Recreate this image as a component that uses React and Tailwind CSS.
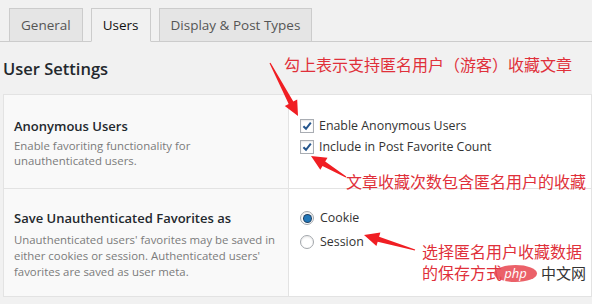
import React from "react"

const font = { fontFamily: '"Open Sans", "Noto Sans", sans-serif' }
const cjk = { fontFamily: '"Noto Sans CJK SC", "Noto Sans", sans-serif' }

// tapered annotation arrow from tail to tip
function arrowPoints(x1, y1, x2, y2) {
  const dx = x2 - x1
  const dy = y2 - y1
  const len = Math.hypot(dx, dy)
  const ux = dx / len
  const uy = dy / len
  const nx = -uy
  const ny = ux
  const head = 15
  const bx = x2 - ux * head
  const by = y2 - uy * head
  const pts = [
    [x1 + nx * 0.6, y1 + ny * 0.6],
    [bx + nx * 2.6, by + ny * 2.6],
    [bx + nx * 7, by + ny * 7],
    [x2, y2],
    [bx - nx * 7, by - ny * 7],
    [bx - nx * 2.6, by - ny * 2.6],
    [x1 - nx * 0.6, y1 - ny * 0.6],
  ]
  return pts.map((p) => p.map((v) => v.toFixed(1)).join(",")).join(" ")
}

function Checkbox() {
  return (
    <span className="flex h-[14px] w-[14px] shrink-0 items-center justify-center border border-[#a9adb3] bg-white shadow-[inset_0_1px_2px_rgba(0,0,0,0.1)]">
      <svg viewBox="0 0 12 12" className="h-[12px] w-[12px]">
        <path d="M2.4 6.2 L5 8.8 L9.8 2.6" fill="none" stroke="#24558c" strokeWidth="2" />
      </svg>
    </span>
  )
}

function Radio({ checked }) {
  return (
    <span className="flex h-[14px] w-[14px] shrink-0 items-center justify-center rounded-full border border-[#a3a7ac] bg-white shadow-[inset_0_1px_2px_rgba(0,0,0,0.1)]">
      {checked && <span className="h-[7px] w-[7px] rounded-full bg-[#2177b8] ring-1 ring-[#1c3f63]" />}
    </span>
  )
}

function Tab({ label, active }) {
  return (
    <div
      className={
        "-mb-px flex h-[34px] items-center border border-[#cccccc] px-[11px] text-[13.5px] " +
        (active ? "border-b-[#f1f1f1] bg-[#f1f1f1] text-[#111]" : "bg-[#e5e5e5] text-[#555]")
      }
    >
      {label}
    </div>
  )
}

export default function App() {
  return (
    <div className="relative h-[304px] w-[592px] overflow-hidden bg-[#f1f1f1]" style={font}>
      <div className="flex items-end gap-[8px] border-b border-[#cccccc] pl-[9px] pt-[8px]">
        <Tab label="General" />
        <Tab label="Users" active />
        <Tab label="Display & Post Types" />
      </div>

      <h2 className="mt-[15px] pl-[3px] text-[16.5px] font-semibold leading-6 text-[#23282d]">User Settings</h2>

      <div className="ml-[3px] mt-[13px] border border-[#e3e3e3] bg-white">
        <div className="grid grid-cols-[285px_1fr] border-b border-[#e3e3e3]">
          <div className="h-[93px] border-r border-[#e3e3e3] bg-[#f9f9f9] pl-[10px] pt-[21px]">
            <p className="text-[13px] font-semibold leading-5 text-[#23282d]">Anonymous Users</p>
            <p className="mt-[2px] whitespace-nowrap text-[11.4px] leading-[15px] text-[#7b7b7b]">
              Enable favoriting functionality for
              <br />
              unauthenticated users.
            </p>
          </div>
          <div className="flex flex-col gap-[7px] pl-[11px] pt-[24px] text-[12.4px] text-[#333]">
            <label className="flex h-[14px] items-center gap-[5px]">
              <Checkbox />
              Enable Anonymous Users
            </label>
            <label className="flex h-[14px] items-center gap-[5px]">
              <Checkbox />
              Include in Post Favorite Count
            </label>
          </div>
        </div>
        <div className="grid grid-cols-[285px_1fr]">
          <div className="h-[107px] border-r border-[#e3e3e3] bg-[#f9f9f9] pl-[10px] pt-[19px]">
            <p className="whitespace-nowrap text-[13px] font-semibold leading-5 text-[#23282d]">Save Unauthenticated Favorites as</p>
            <p className="mt-[4px] whitespace-nowrap text-[11.4px] leading-[16px] text-[#7b7b7b]">
              Unauthenticated users' favorites may be saved in
              <br />
              either cookies or session. Authenticated users'
              <br />
              favorites are saved as user meta.
            </p>
          </div>
          <div className="flex flex-col gap-[10px] pl-[11px] pt-[22px] text-[12.4px] text-[#333]">
            <label className="flex h-[14px] items-center gap-[6px]">
              <Radio checked />
              Cookie
            </label>
            <label className="flex h-[14px] items-center gap-[6px]">
              <Radio />
              Session
            </label>
          </div>
        </div>
      </div>

      {/* annotations */}
      <svg className="pointer-events-none absolute left-0 top-0" width="592" height="304">
        <polygon points={arrowPoints(270, 63, 298, 116)} fill="#f01e23" />
        <polygon points={arrowPoints(346, 177, 311, 156)} fill="#f01e23" />
        <polygon points={arrowPoints(415, 250, 364, 235)} fill="#f01e23" />
      </svg>
      <p className="absolute left-[284px] top-[54px] text-[16px] leading-5 text-[#e0303a]" style={cjk}>
        勾上表示支持匿名用户（游客）收藏文章
      </p>
      <p className="absolute left-[346px] top-[171px] text-[16px] leading-5 text-[#e0303a]" style={cjk}>
        文章收藏次数包含匿名用户的收藏
      </p>
      <p className="absolute left-[422px] top-[241px] text-[16px] leading-[21px] text-[#e0303a]" style={cjk}>
        选择匿名用户收藏数据
        <br />
        的保存方式
      </p>
      <div className="absolute left-[494px] top-[263px] flex items-center gap-[4px]">
        <span className="flex h-[17px] w-[43px] items-center justify-center rounded-[50%] bg-[#e8454f]/85 text-[13px] italic leading-none text-white" style={font}>
          php
        </span>
        <span className="text-[15px] leading-5 text-[#333]" style={cjk}>中文网</span>
      </div>
    </div>
  )
}
